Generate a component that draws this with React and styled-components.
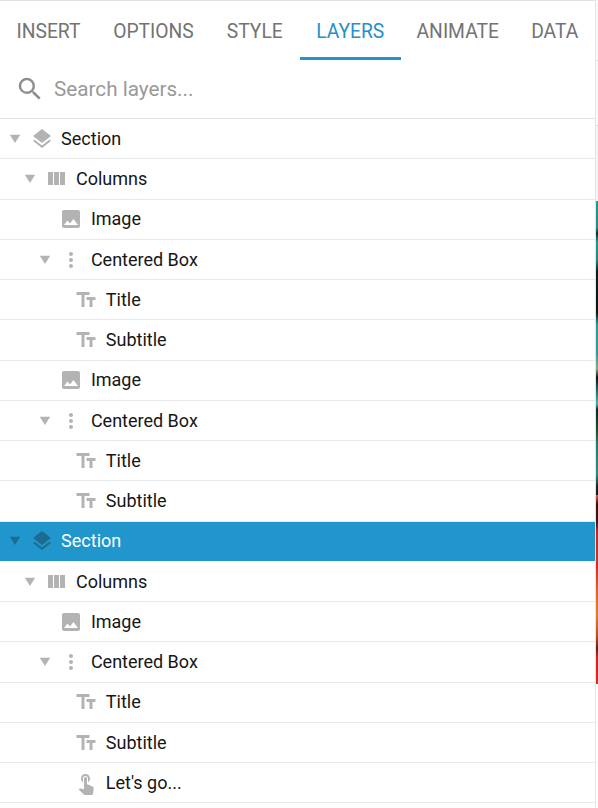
import React from "react";
import styled, { createGlobalStyle } from "styled-components";
import {
  MdImage,
  MdLayers,
  MdMoreVert,
  MdSearch,
  MdTextFields,
  MdTouchApp,
} from "react-icons/md";

const GlobalStyle = createGlobalStyle`
  * {
    box-sizing: border-box;
  }
  body {
    margin: 0;
    background: #fff;
    font-family: Roboto, "Liberation Sans", sans-serif;
    overflow: hidden;
  }
`;

const Screen = styled.div`
  display: flex;
  width: 598px;
  height: 808px;
  overflow: hidden;
`;

const Panel = styled.div`
  width: 595px;
  height: 808px;
  border-top: 1px solid #e2e2e2;
  overflow: hidden;
`;

const Tabs = styled.div`
  display: grid;
  grid-template-columns: 97px 113px 89.5px 101.5px 113.5px 80.5px;
  height: 59px;
`;

const Tab = styled.div`
  display: flex;
  align-items: center;
  justify-content: center;
  padding-top: 5px;
  border-bottom: 3px solid ${(props) => (props.$active ? "#2196cc" : "transparent")};
  color: ${(props) => (props.$active ? "#2590c8" : "#737373")};
  font-size: 19.3px;
  line-height: 24px;
  white-space: nowrap;
`;

const Search = styled.div`
  display: flex;
  align-items: center;
  height: 59.2px;
  padding-left: 15px;
  border-bottom: 1px solid #e3e3e3;
  color: #999;
  font-size: 20.7px;

  svg {
    width: 30px;
    height: 30px;
    margin-right: 9px;
    color: #8e8e8e;
  }
`;

const Row = styled.div`
  display: flex;
  align-items: center;
  height: 40.25px;
  padding-left: ${(props) => props.$depth * 14.9 + 9}px;
  border-bottom: 1px solid ${(props) => (props.$selected ? "#fff" : "#e9e9e9")};
  background: ${(props) => (props.$selected ? "#2196cc" : "#fff")};
  background-clip: padding-box;
  color: ${(props) => (props.$selected ? "#fff" : "#161616")};
  font-size: 18px;
  line-height: 24px;

  svg {
    color: ${(props) => (props.$selected ? "#1a6c91" : "#b3b3b3")};
  }
`;

const Arrow = styled.span`
  display: flex;
  width: 12px;
  margin-right: 8.6px;
  visibility: ${(props) => (props.$open ? "visible" : "hidden")};
`;

const RowIcon = styled.span`
  display: flex;
  width: 24px;
  margin-right: 7.5px;

  svg {
    width: 24px;
    height: 24px;
  }
`;

const Divider = styled.div`
  width: 1px;
  background: #e4e4e4;
`;

const Canvas = styled.div`
  flex: 1;
  display: flex;
  flex-direction: column;
`;

const CanvasBar = styled.div`
  height: ${(props) => props.$height}px;
  border-bottom: 1px solid #dedede;
  background: #fafafa;
`;

const CanvasGap = styled.div`
  height: 75px;
  background: #f5f5f5;
`;

const Photo = styled.div`
  height: ${(props) => props.$height}px;
  background: ${(props) => props.$fill};
`;

const teal = `linear-gradient(
  #259b91 0%, #248d86 9%, #0b2f30 11%, #289990 14%, #24877f 20%,
  #06201f 24%, #0a1717 38%, #2d9c95 42%, #359b94 52%, #85ad8b 57%,
  #071716 60%, #2f9990 67%, #45b4ae 69%, #0b2824 71%, #204f29 78%,
  #267c6f 83%, #2d8c83 93%, #152c28 97%, #101a18 100%
)`;

const red = `linear-gradient(
  #e9573e 0%, #37120e 5%, #4d1414 15%, #cb2420 19%, #ce3323 38%,
  #dc6329 50%, #dc832d 63%, #b64e22 75%, #5a2018 81%, #cc2b20 86%,
  #db2920 100%
)`;

const ColumnsIcon = () => (
  <svg viewBox="0 0 24 24" fill="currentColor">
    <path d="M10 18h5V5h-5v13zm-6 0h5V5H4v13zM16 5v13h5V5h-5z" />
  </svg>
);

const ArrowIcon = () => (
  <svg width="12" height="10" viewBox="0 0 12 10" fill="currentColor">
    <path d="M0.8 0.7h10.4L6 8.9z" />
  </svg>
);

const icons = {
  section: MdLayers,
  columns: ColumnsIcon,
  image: MdImage,
  box: MdMoreVert,
  text: MdTextFields,
  button: MdTouchApp,
};

const tabs = ["INSERT", "OPTIONS", "STYLE", "LAYERS", "ANIMATE", "DATA"];

const layers = [
  { name: "Section", type: "section", depth: 0, open: true },
  { name: "Columns", type: "columns", depth: 1, open: true },
  { name: "Image", type: "image", depth: 2 },
  { name: "Centered Box", type: "box", depth: 2, open: true },
  { name: "Title", type: "text", depth: 3 },
  { name: "Subtitle", type: "text", depth: 3 },
  { name: "Image", type: "image", depth: 2 },
  { name: "Centered Box", type: "box", depth: 2, open: true },
  { name: "Title", type: "text", depth: 3 },
  { name: "Subtitle", type: "text", depth: 3 },
  { name: "Section", type: "section", depth: 0, open: true, selected: true },
  { name: "Columns", type: "columns", depth: 1, open: true },
  { name: "Image", type: "image", depth: 2 },
  { name: "Centered Box", type: "box", depth: 2, open: true },
  { name: "Title", type: "text", depth: 3 },
  { name: "Subtitle", type: "text", depth: 3 },
  { name: "Let's go...", type: "button", depth: 3 },
];

function Layer({ layer }) {
  const Icon = icons[layer.type];
  return (
    <Row $depth={layer.depth} $selected={layer.selected}>
      <Arrow $open={layer.open}>
        <ArrowIcon />
      </Arrow>
      <RowIcon>
        <Icon />
      </RowIcon>
      {layer.name}
    </Row>
  );
}

function App() {
  return (
    <Screen>
      <GlobalStyle />
      <Panel>
        <Tabs>
          {tabs.map((tab) => (
            <Tab key={tab} $active={tab === "LAYERS"}>
              {tab}
            </Tab>
          ))}
        </Tabs>
        <Search>
          <MdSearch />
          Search layers...
        </Search>
        {layers.map((layer, i) => (
          <Layer key={i} layer={layer} />
        ))}
      </Panel>
      <Divider />
      <Canvas>
        <CanvasBar $height={61} />
        <CanvasBar $height={65} />
        <CanvasGap />
        <Photo $height={294} $fill={teal} />
        <Photo $height={189} $fill={red} />
      </Canvas>
    </Screen>
  );
}

export default App;
